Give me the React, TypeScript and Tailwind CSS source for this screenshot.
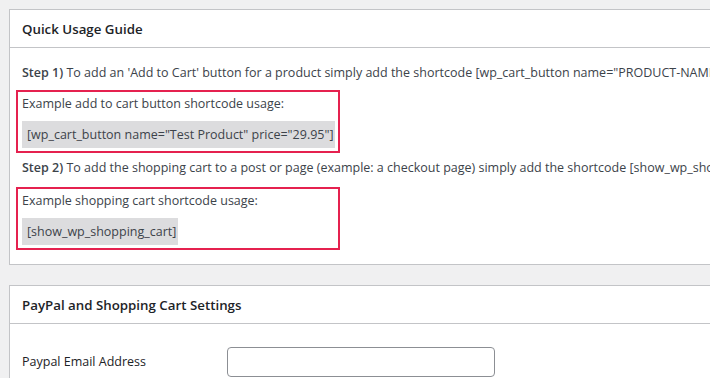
import React from 'react';

function ExampleBox({ label, code, codeWidth }: { label: string; code: string; codeWidth: string }) {
  return (
    <div className="ml-[-6px] w-[324px] border-2 border-[#e5214f] pl-[4px] pt-[2px] pb-[3px]">
      <p className="leading-[20px]">{label}</p>
      <div className={`mt-[7px] h-[27px] whitespace-nowrap bg-[#dcdcde] px-[5px] leading-[27px] ${codeWidth}`}>{code}</div>
    </div>
  );
}

function App() {
  return (
    <div className="w-[710px] h-[378px] overflow-hidden bg-[#f0f0f1] pt-[9px] pl-[9px] text-[12.5px] text-[#3c434a] font-['Open_Sans',sans-serif]">
      <div className="w-[1100px] border border-[#c3c4c7] bg-white">
        <div className="h-[38px] border-b border-[#c3c4c7] px-[12px] pt-[3px] flex items-center">
          <h2 className="text-[13.3px] font-semibold text-[#1d2327]">Quick Usage Guide</h2>
        </div>
        <div className="px-[12px] pt-[15px] pb-[14px]">
          <p className="leading-[20px] whitespace-nowrap">
            <strong className="font-semibold">Step 1)</strong> To add an 'Add to Cart' button for a product simply add the shortcode [wp_cart_button name="PRODUCT-NAME" price="PRODUCT-PRICE"] to a post or page next to the product.
          </p>
          <div className="mt-[7px]">
            <ExampleBox label="Example add to cart button shortcode usage:" code={'[wp_cart_button name="Test Product" price="29.95"]'} codeWidth="w-[313px]" />
          </div>
          <p className="mt-[5px] leading-[20px] whitespace-nowrap">
            <strong className="font-semibold">Step 2)</strong> To add the shopping cart to a post or page (example: a checkout page) simply add the shortcode [show_wp_shopping_cart] to a post or page.
          </p>
          <div className="mt-[9px]">
            <ExampleBox label="Example shopping cart shortcode usage:" code="[show_wp_shopping_cart]" codeWidth="w-[156px]" />
          </div>
        </div>
      </div>

      <div className="mt-[20px] w-[1100px] border border-[#c3c4c7] bg-white">
        <div className="h-[38px] border-b border-[#c3c4c7] px-[12px] pt-[2px] flex items-center">
          <h2 className="text-[13.3px] font-semibold text-[#1d2327]">PayPal and Shopping Cart Settings</h2>
        </div>
        <div className="px-[12px] pt-[23px] pb-[19px] flex items-center">
          <label className="w-[205px] font-medium text-[#1d2327]">Paypal Email Address</label>
          <input type="text" className="w-[268px] h-[30px] rounded-[4px] border border-[#8c8f94] bg-white" />
        </div>
      </div>
    </div>
  );
}

export default App;
